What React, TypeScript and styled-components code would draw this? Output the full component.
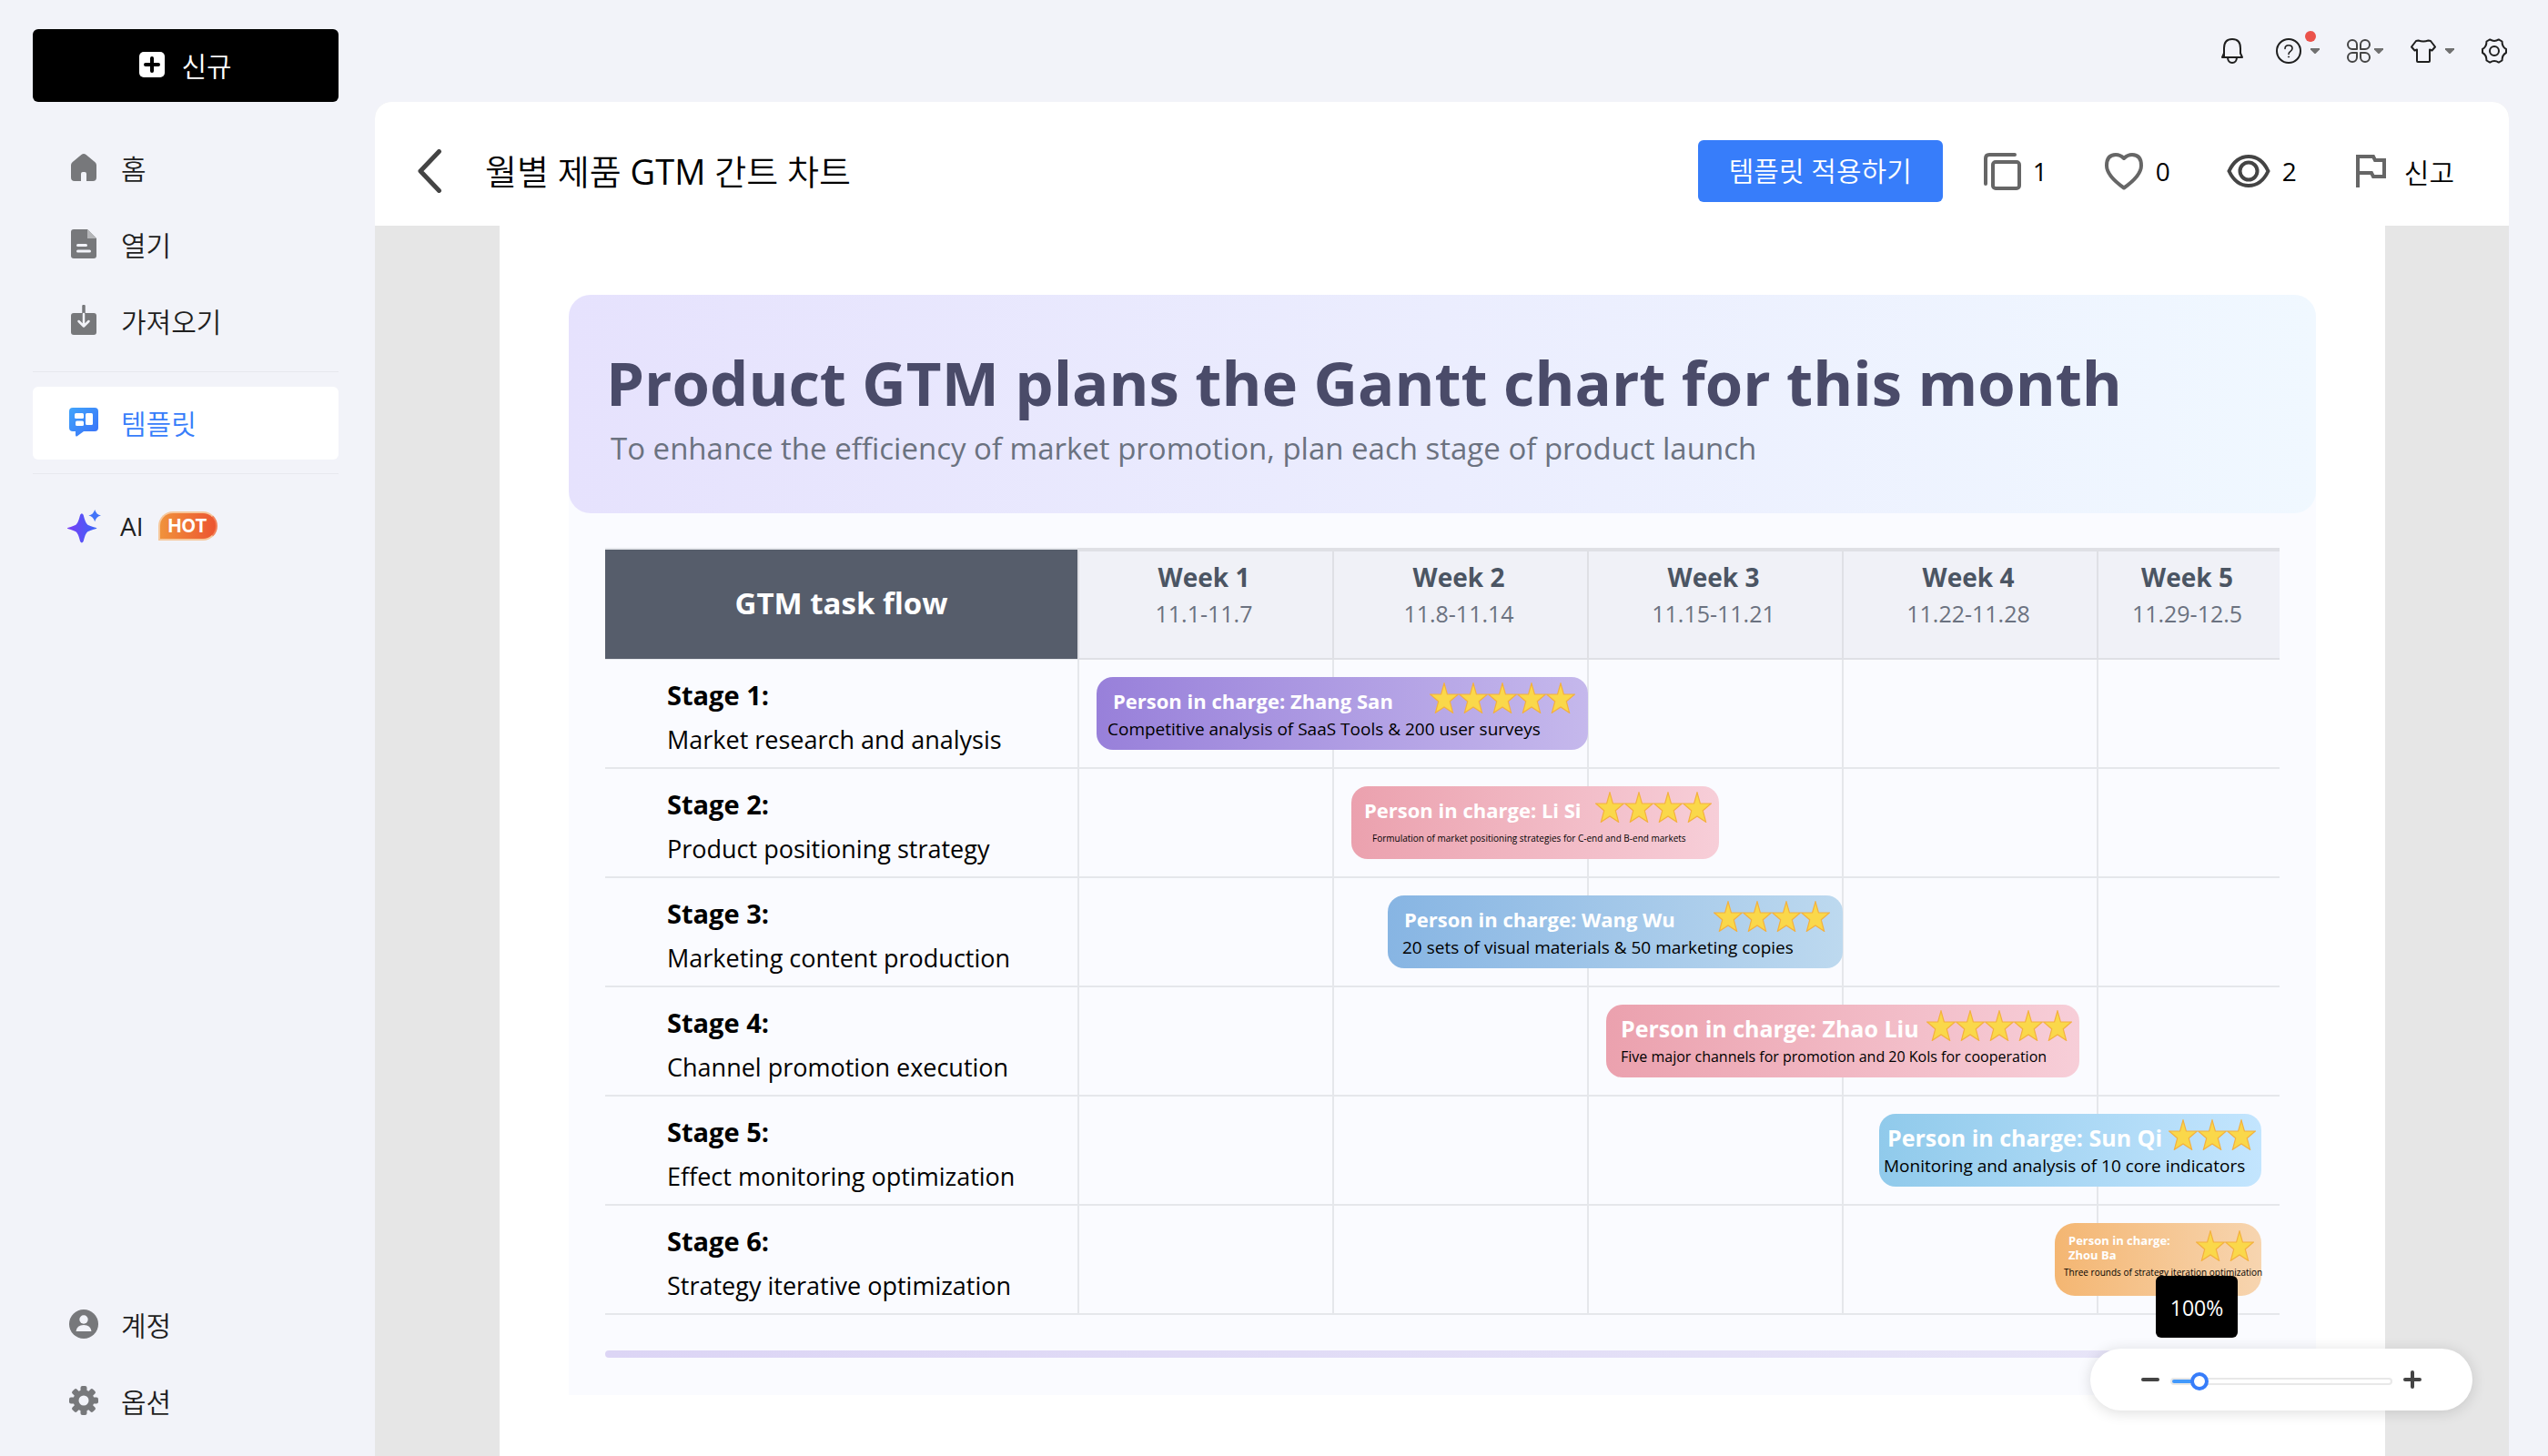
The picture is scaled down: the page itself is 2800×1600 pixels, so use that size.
import React, { useState } from "react";
import styled, { createGlobalStyle } from "styled-components";

const GlobalStyle = createGlobalStyle`
  *, *::before, *::after { box-sizing: border-box; }
  body {
    margin: 0;
    background: #f2f3f9;
    color: #1f1f1f;
    font-family: "Open Sans", "Noto Sans CJK KR", sans-serif;
  }
  button, input { font: inherit; color: inherit; }
  button { border: 0; padding: 0; background: none; cursor: pointer; }
  h1, h2, p { margin: 0; }
  svg { display: block; flex: none; }
`;

/* ---------- shell ---------- */

const Shell = styled.div`
  display: grid;
  grid-template-columns: 412px minmax(0, 1fr);
  min-height: 100vh;
`;

const Sidebar = styled.aside`
  display: flex;
  flex-direction: column;
  padding: 32px 40px 20px 36px;
`;

const NewButton = styled.button`
  display: flex;
  align-items: center;
  justify-content: center;
  gap: 18px;
  height: 80px;
  margin-bottom: 33px;
  padding-bottom: 2px;
  border-radius: 6px;
  background: #000;
  color: #fff;
  font-size: 30px;
  font-weight: 350;
`;

const Nav = styled.nav`
  display: flex;
  flex-direction: column;
  gap: 4px;
`;

const BottomNav = styled(Nav)`
  margin-top: auto;
`;

const NavItem = styled.a<{ $active?: boolean }>`
  display: flex;
  align-items: center;
  gap: 25px;
  height: 80px;
  padding: 0 0 3px 40px;
  border-radius: 6px;
  background: ${(p) => (p.$active ? "#fff" : "transparent")};
  color: ${(p) => (p.$active ? "#377dfa" : "#1f1f1f")};
  font-size: 30px;
  font-weight: 350;
  text-decoration: none;
`;

const AiItem = styled(NavItem)`
  gap: 21px;
  padding: 1px 0 0 38px;
`;

const LatinLabel = styled.span`
  font-size: 28px;
  font-weight: 400;
`;

const Divider = styled.hr`
  width: 100%;
  height: 1px;
  margin: 15px 0 16px;
  border: 0;
  background: #e7e8ee;
`;

const HotBadge = styled.span`
  display: flex;
  align-items: center;
  height: 32px;
  margin-left: -5px;
  padding: 0 9px;
  border: 2px solid #f6c79b;
  border-right-color: #f2825a;
  border-radius: 16px 16px 16px 0;
  background: linear-gradient(90deg, #f0923c, #ec5530);
  color: #fff;
  font-family: Inter, sans-serif;
  font-size: 20px;
  font-weight: 700;
`;

const Content = styled.div`
  display: flex;
  flex-direction: column;
  min-width: 0;
  padding-right: 43px;
`;

const TopBar = styled.header`
  display: flex;
  align-items: center;
  justify-content: flex-end;
  gap: 30px;
  height: 112px;
  padding-right: 2px;
`;

const TopButton = styled.button<{ $gap?: number }>`
  position: relative;
  display: flex;
  align-items: center;
  gap: ${(p) => p.$gap ?? 0}px;
`;

const Dot = styled.span`
  position: absolute;
  top: -8px;
  right: 4px;
  width: 12px;
  height: 12px;
  border-radius: 50%;
  background: #eb524b;
`;

const Panel = styled.main`
  position: relative;
  display: flex;
  flex: 1;
  flex-direction: column;
  overflow: hidden;
  border-radius: 18px 18px 0 0;
  background: #e6e6e6;
`;

const TitleBar = styled.div`
  display: flex;
  align-items: center;
  height: 136px;
  padding: 16px 60px 0 46px;
  background: #fff;
`;

const BackButton = styled.button`
  display: flex;
  margin-right: 47px;
`;

const DocTitle = styled.h1`
  flex: 1;
  padding-bottom: 4px;
  color: #000;
  font-size: 38px;
  font-weight: 350;
  white-space: nowrap;
`;

const Latin = styled.span`
  font-weight: 400;
`;

const Actions = styled.div`
  display: flex;
  align-items: center;
  gap: 44px;
`;

const Stats = styled.div`
  display: flex;
  align-items: center;
  gap: 62px;
`;

const ApplyButton = styled.button`
  height: 68px;
  padding: 0 34px 4px;
  border-radius: 6px;
  background: #377dfa;
  color: #fff;
  font-size: 30px;
  font-weight: 350;
  white-space: nowrap;
`;

const Action = styled.button`
  display: flex;
  align-items: center;
  gap: 13px;
  color: #000;
  font-size: 28px;
  white-space: nowrap;
`;

const ReportAction = styled(Action)`
  gap: 20px;
  padding-left: 2px;
  font-size: 30px;
  font-weight: 350;
`;

/* ---------- document ---------- */

const Viewer = styled.div`
  display: flex;
  flex: 1;
  padding: 0 136px 0 137px;
`;

const Page = styled.div`
  flex: 1;
  min-width: 0;
  padding: 76px 76px 60px;
  background: #fff;
`;

const Card = styled.section`
  border-radius: 24px 24px 0 0;
  background: #fafbff;
  padding-bottom: 41px;
`;

const Banner = styled.div`
  min-height: 240px;
  padding: 56px 41px 47px;
  border-radius: 24px;
  background: linear-gradient(90deg, #e6e2fd, #f0f8ff);
`;

const BannerTitle = styled.h2`
  color: #4a4b69;
  font-size: 67px;
  font-weight: 700;
  line-height: 80px;
  white-space: nowrap;
`;

const BannerText = styled.p`
  margin-top: 9px;
  padding-left: 5px;
  color: #6b7280;
  font-size: 33px;
  line-height: 48px;
  white-space: nowrap;
`;

const ChartArea = styled.div`
  padding: 38px 40px 0;
`;

const Gantt = styled.table`
  display: block;
  width: 100%;
  border-spacing: 0;
  thead, tbody { display: block; }
`;

const columns = "519fr 280fr 280fr 280fr 280fr 201fr";

const HeadRow = styled.tr`
  display: grid;
  grid-template-columns: ${columns};
  height: 123px;
`;

const TaskHead = styled.th`
  display: flex;
  align-items: center;
  justify-content: center;
  padding: 0 0 4px;
  border-top: 2px solid #e5e7eb;
  border-bottom: 1px solid #e5e7eb;
  background: #565d6b;
  color: #fff;
  font-size: 33px;
  font-weight: 700;
`;

const WeekHead = styled.th`
  display: flex;
  flex-direction: column;
  padding: 8px 4px 0 0;
  border: solid #dfe0e5;
  border-width: 4px 0 2px 2px;
  background: #f0f1f7;
  color: #4b5563;
  font-size: 28px;
  font-weight: 700;
  line-height: 40px;
  text-align: center;
`;

const WeekDates = styled.span`
  color: #6b7280;
  font-size: 25px;
  font-weight: 400;
`;

const Row = styled.tr`
  position: relative;
  display: grid;
  grid-template-columns: ${columns};
  height: 120px;
`;

const Stage = styled.th`
  display: flex;
  flex-direction: column;
  gap: 1px;
  padding: 15px 0 0 68px;
  border-bottom: 2px solid #e5e7eb;
  color: #000;
  font-size: 29px;
  font-weight: 700;
  line-height: 48px;
  text-align: left;
  white-space: nowrap;
`;

const StageText = styled.span`
  font-size: 27px;
  font-weight: 400;
`;

const Cell = styled.td`
  padding: 0;
  border: solid #e5e7eb;
  border-width: 0 0 2px 2px;
`;

const Bar = styled.div<{ $from: string; $to: string; $compact?: boolean }>`
  position: absolute;
  top: 19px;
  height: 80px;
  padding-top: ${(p) => (p.$compact ? 8 : 6)}px;
  border-radius: ${(p) => (p.$compact ? 22 : 18)}px;
  background: linear-gradient(90deg, ${(p) => p.$from}, ${(p) => p.$to});
`;

const BarHead = styled.div<{ $left: number; $right: number; $compact?: boolean }>`
  display: flex;
  align-items: ${(p) => (p.$compact ? "flex-start" : "flex-end")};
  justify-content: space-between;
  height: ${(p) => (p.$compact ? 36 : 34)}px;
  padding: 0 ${(p) => p.$right}px 0 ${(p) => p.$left}px;
`;

const Owner = styled.strong<{ $size: number; $compact?: boolean }>`
  padding-top: ${(p) => (p.$compact ? 3 : 0)}px;
  color: #fff;
  font-size: ${(p) => p.$size}px;
  font-weight: 700;
  line-height: ${(p) => (p.$compact ? 16 : 28)}px;
  white-space: pre;
`;

const Stars = styled.span`
  display: flex;
`;

const BarText = styled.p<{ $left: number; $size: number; $compact?: boolean }>`
  margin-top: ${(p) => (p.$compact ? 0 : 5)}px;
  padding-left: ${(p) => p.$left}px;
  color: #000;
  font-size: ${(p) => p.$size}px;
  line-height: ${(p) => (p.$compact ? 20 : 24)}px;
  white-space: nowrap;
`;

const FootLine = styled.div`
  height: 8px;
  margin-top: 39px;
  border-radius: 4px;
  background: linear-gradient(90deg, #dcd5f5, #e8e6f8);
`;

/* ---------- zoom control ---------- */

const ZoomDock = styled.div`
  position: absolute;
  right: 40px;
  bottom: 50px;
  display: flex;
  align-items: center;
  gap: 12px;
  width: 420px;
  height: 68px;
  padding: 0 56px;
  border-radius: 34px;
  background: #fff;
  box-shadow: 0 2px 16px rgba(0, 0, 0, 0.14);
`;

const ZoomSlider = styled.input`
  flex: 1;
  min-width: 0;
  height: 20px;
  margin: 4px 0 0;
  appearance: none;
  background: transparent;

  &::-webkit-slider-runnable-track {
    height: 8px;
    border: 2px solid #e8e8e8;
    border-radius: 4px;
    background: linear-gradient(#4299fb, #4299fb) 0 0 / 24px 100% no-repeat #fff;
  }
  &::-webkit-slider-thumb {
    appearance: none;
    width: 20px;
    height: 20px;
    margin-top: -8px;
    border: 4px solid #377dfa;
    border-radius: 50%;
    background: #fff;
  }
`;

const ZoomTip = styled.output`
  position: absolute;
  right: 258px;
  bottom: 80px;
  display: flex;
  align-items: center;
  justify-content: center;
  width: 90px;
  height: 68px;
  padding-top: 2px;
  border-radius: 6px;
  background: #000;
  color: #fff;
  font-size: 23px;
`;

/* ---------- icons ---------- */

const PlusSquareIcon = () => (
  <svg width="28" height="28" viewBox="0 0 28 28">
    <rect width="28" height="28" rx="5" fill="#fff" />
    <path d="M14 7v14M7 14h14" stroke="#000" strokeWidth="4" strokeLinecap="round" />
  </svg>
);

const HomeIcon = () => (
  <svg width="32" height="32" viewBox="0 0 32 32" fill="#77787b">
    <path d="M13.400 2q2.600-2 5.200 0L28.500 10.200Q30 11.600 30 13.500V27q0 4-4 4h-7v-8q0-2-2-2h-2q-2 0-2 2v8H6q-4 0-4-4V13.500q0-1.900 1.500-3.300z" />
  </svg>
);

const FileIcon = () => (
  <svg width="32" height="32" viewBox="0 0 32 32">
    <path d="M5 0h15l10 10v19q0 3-3 3H5q-3 0-3-3V3q0-3 3-3z" fill="#77787b" />
    <path d="M20 0l10 10H20z" fill="#b4b5b8" />
    <path d="M9.500 17.500h9M9.500 24h13" stroke="#f2f3f9" strokeWidth="3" strokeLinecap="round" />
  </svg>
);

const ImportIcon = () => (
  <svg width="32" height="34" viewBox="0 0 32 34">
    <rect x="2" y="9" width="28" height="24" rx="3" fill="#77787b" />
    <path d="M16 1.500V9" stroke="#77787b" strokeWidth="3.500" strokeLinecap="round" />
    <path d="M16 10v13M10.500 18l5.500 5.500 5.500-5.500" fill="none" stroke="#f2f3f9" strokeWidth="2.500" strokeLinecap="round" strokeLinejoin="round" />
  </svg>
);

const TemplateIcon = () => (
  <svg width="32" height="32" viewBox="0 0 32 32">
    <defs>
      <linearGradient id="tpl" x1="0" y1="0" x2="1" y2="1">
        <stop offset="0" stopColor="#41a5fb" />
        <stop offset="1" stopColor="#3a70f8" />
      </linearGradient>
    </defs>
    <path d="M4 0h24q4 0 4 4v18q0 4-4 4H16l-7.500 5.500Q7 32 7 30v-4H4q-4 0-4-4V4q0-4 4-4z" fill="url(#tpl)" />
    <g fill="#fff">
      <rect x="6" y="6" width="10" height="6" rx="1.500" />
      <rect x="7" y="14.500" width="9" height="5.500" rx="1.500" />
      <rect x="18" y="6" width="8" height="13" rx="1.500" />
    </g>
  </svg>
);

const SparkleIcon = () => (
  <svg width="37" height="38" viewBox="0 0 38 38">
    <defs>
      <linearGradient id="spark" x1="0" y1="0" x2="1" y2="0">
        <stop offset="0" stopColor="#7a3df5" />
        <stop offset="1" stopColor="#3a66f8" />
      </linearGradient>
    </defs>
    <path d="M14.500 6.500q1.800-3.200 3.600 0 2.400 9.900 4.900 11.200 1.500 1 9.500 3.300 1.500.500 0 1-8 2.300-9.500 3.300-2.500 1.300-4.900 11.200-1.800 3-3.600 0-2.400-9.900-4.900-11.200Q8.100 24.300.500 22q-1.500-.500 0-1 7.600-2.300 9.100-3.300 2.500-1.300 4.900-11.200z" fill="url(#spark)" />
    <path d="M31 .500q1.600 5.700 7 6.800-5.400 1.100-7 6.800-1.600-5.700-7-6.800 5.400-1.100 7-6.800z" fill="#4274f8" />
  </svg>
);

const UserIcon = () => (
  <svg width="32" height="32" viewBox="0 0 32 32">
    <circle cx="16" cy="16" r="16" fill="#77787b" />
    <circle cx="16" cy="11" r="4.700" fill="#f2f3f9" />
    <path d="M7.500 24q1-7 8.500-7t8.500 7z" fill="#f2f3f9" />
  </svg>
);

const CogIcon = () => (
  <svg width="32" height="32" viewBox="0 0 32 32">
    <g fill="#77787b">
      {[0, 45, 90, 135].map((a) => (
        <rect key={a} transform={`rotate(${a} 16 16)`} x="12.500" y="0" width="7" height="32" rx="2" />
      ))}
      <circle cx="16" cy="16" r="11.500" />
    </g>
    <circle cx="16" cy="16" r="5.500" fill="#f2f3f9" />
  </svg>
);

const Caret = () => (
  <svg width="10" height="6" viewBox="0 0 10 6">
    <path d="M0 0h10v1.500L5.500 6h-1L0 1.500z" fill="#707070" />
  </svg>
);

const line = { fill: "none", stroke: "#1f1f1f", strokeWidth: 2, strokeLinejoin: "round" as const, strokeLinecap: "round" as const };

const BellIcon = () => (
  <svg width="32" height="28" viewBox="-2 0 32 28" {...line}>
    <path d="M3 20.500V11q0-10 9-10t9 10v5.500l2 4.500H1l2-4.500" />
    <path d="M7 21.500q.500 5.500 5 5.500t5-5.500" />
  </svg>
);

const HelpIcon = () => (
  <svg width="28" height="28" viewBox="0 0 28 28" {...line}>
    <circle cx="14" cy="14" r="13" />
    <path d="M10 11.500Q10 7.800 14 7.800t4 3.400q0 1.800-2 3.200-2 1.300-2 3.100" strokeWidth="1.600" />
    <circle cx="14" cy="20.500" r=".6" strokeWidth="1" />
  </svg>
);

const AppsIcon = () => (
  <svg width="26" height="26" viewBox="0 0 26 26" {...line} stroke="#444">
    <path d="M11 11H6a5 5 0 1 1 5-5z" />
    <path d="M15 11h5a5 5 0 1 0-5-5z" />
    <path d="M11 15H6a5 5 0 1 0 5 5z" />
    <path d="M15 15h5a5 5 0 1 1-5 5z" />
  </svg>
);

const ShirtIcon = () => (
  <svg width="28" height="26" viewBox="0 0 28 26" {...line}>
    <path d="M8.500 1.500Q14 3.500 19.500 1.500L22 2l5 6.500-3.500 4-2.500-1V24q0 1-1 1H8q-1 0-1-1V11.500l-2.500 1L1 8.500 6 2z" />
  </svg>
);

const HexGearIcon = () => (
  <svg width="28" height="28" viewBox="0 0 28 28" {...line}>
    <circle cx="14" cy="14" r="5" />
    <path d="M27 12V16Q22.600 18.200 22.500 24.500L18.800 26.600Q14 23.400 9.200 26.600L5.500 24.500Q5.400 18.200 1 16V12Q5.400 9.800 5.500 3.500L9.200 1.400Q14 4.600 18.800 1.400L22.500 3.500Q22.600 9.800 27 12z" />
  </svg>
);

const BackIcon = () => (
  <svg width="28" height="48" viewBox="0 0 28 48">
    <path d="M24.500 2.500L4 24l20.500 21.500" fill="none" stroke="#444" strokeWidth="5" strokeLinecap="round" strokeLinejoin="round" />
  </svg>
);

const CopyIcon = () => (
  <svg width="42" height="42" viewBox="0 0 42 42" fill="none" stroke="#666" strokeWidth="4" strokeLinecap="round">
    <rect x="11" y="11" width="29" height="29" rx="3" />
    <path d="M3 35V7q0-4 4-4h28" />
  </svg>
);

const HeartIcon = () => (
  <svg width="44" height="42" viewBox="0 0 44 42">
    <path d="M22 39.500Q3 26 3 15 3 3 13 3q5 0 9 4 4-4 9-4 10 0 10 12 0 11-19 24.500z" fill="none" stroke="#666" strokeWidth="4" strokeLinejoin="round" />
  </svg>
);

const EyeIcon = () => (
  <svg width="48" height="38" viewBox="0 0 48 38" fill="none" stroke="#444" strokeWidth="4">
    <path d="M2.500 19Q10 3 24 3t21.500 16Q38 35 24 35T2.500 19z" />
    <circle cx="24" cy="19" r="9.500" />
  </svg>
);

const FlagIcon = () => (
  <svg width="34" height="38" viewBox="0 0 34 38">
    <path d="M3 37V3h17l2 4h10v18H20l-2-4H3" fill="none" stroke="#666" strokeWidth="4" />
  </svg>
);

const StarIcon = () => (
  <svg width="32" height="34" viewBox="0 0 32 34">
    <path d="M16 .800L19.400 13H31.400L22.300 20.800 25.600 33.300 16 27 6.400 33.300 9.700 20.800.600 13H12.600z" fill="#fad84a" stroke="#f4b03e" strokeWidth="1.200" />
  </svg>
);

const MinusIcon = () => (
  <svg width="20" height="20" viewBox="0 0 20 20">
    <path d="M2 10h16" stroke="#444" strokeWidth="4" strokeLinecap="round" />
  </svg>
);

const PlusIcon = () => (
  <svg width="20" height="20" viewBox="0 0 20 20">
    <path d="M2 10h16M10 2v16" stroke="#444" strokeWidth="4" strokeLinecap="round" />
  </svg>
);

/* ---------- data ---------- */

const weeks = [
  ["Week 1", "11.1-11.7"],
  ["Week 2", "11.8-11.14"],
  ["Week 3", "11.15-11.21"],
  ["Week 4", "11.22-11.28"],
  ["Week 5", "11.29-12.5"],
];

/* start and span are in units of the 1840-unit wide chart */
const stages = [
  { text: "Market research and analysis", start: 540, span: 540, from: "#9880da", to: "#c5b8ec", owner: "Person in charge: Zhang San", ownerSize: 22, ownerLeft: 18, stars: 5, right: 14, note: "Competitive analysis of SaaS Tools & 200 user surveys", noteSize: 19, noteLeft: 12 },
  { text: "Product positioning strategy", start: 820, span: 404, from: "#eba1ae", to: "#f7ced8", owner: "Person in charge: Li Si", ownerSize: 22, ownerLeft: 14, stars: 4, right: 8, note: "Formulation of market positioning strategies for C-end and B-end markets", noteSize: 10, noteLeft: 23 },
  { text: "Marketing content production", start: 860, span: 500, from: "#87b5e3", to: "#bdd9ef", owner: "Person in charge: Wang Wu", ownerSize: 22, ownerLeft: 18, stars: 4, right: 14, note: "20 sets of visual materials & 50 marketing copies", noteSize: 19, noteLeft: 16 },
  { text: "Channel promotion execution", start: 1100, span: 520, from: "#eba1ae", to: "#f7ced8", owner: "Person in charge: Zhao Liu", ownerSize: 25, ownerLeft: 16, stars: 5, right: 8, note: "Five major channels for promotion and 20 Kols for cooperation", noteSize: 16, noteLeft: 16 },
  { text: "Effect monitoring optimization", start: 1400, span: 420, from: "#90caeb", to: "#c3e5fe", owner: "Person in charge: Sun Qi", ownerSize: 25, ownerLeft: 9, stars: 3, right: 6, note: "Monitoring and analysis of 10 core indicators", noteSize: 19, noteLeft: 5 },
  { text: "Strategy iterative optimization", start: 1593, span: 227, from: "#f4b672", to: "#f7d5b0", owner: "Person in charge:\nZhou Ba", ownerSize: 13, ownerLeft: 15, stars: 2, right: 8, note: "Three rounds of strategy iteration optimization", noteSize: 10, noteLeft: 10, compact: true },
];

const pct = (n: number) => `${(n / 1840) * 100}%`;

function StageBar({ stage }: { stage: (typeof stages)[number] }) {
  const { compact } = stage;
  return (
    <Bar $from={stage.from} $to={stage.to} $compact={compact} style={{ left: pct(stage.start), width: pct(stage.span) }}>
      <BarHead $left={stage.ownerLeft} $right={stage.right} $compact={compact}>
        <Owner $size={stage.ownerSize} $compact={compact}>{stage.owner}</Owner>
        <Stars role="img" aria-label={`${stage.stars}`}>
          {Array.from({ length: stage.stars }, (_, i) => <StarIcon key={i} />)}
        </Stars>
      </BarHead>
      <BarText $left={stage.noteLeft} $size={stage.noteSize} $compact={compact}>{stage.note}</BarText>
    </Bar>
  );
}

function ZoomControl() {
  const [zoom, setZoom] = useState(100);
  const step = (d: number) => setZoom((z) => Math.min(1000, Math.max(10, z + d)));
  return (
    <ZoomDock>
      <ZoomTip htmlFor="zoom">{zoom}%</ZoomTip>
      <button aria-label="축소" onClick={() => step(-10)}><MinusIcon /></button>
      <ZoomSlider id="zoom" type="range" min={10} max={1000} value={zoom} aria-label="확대/축소" onChange={(e) => setZoom(Number(e.target.value))} />
      <button aria-label="확대" onClick={() => step(10)}><PlusIcon /></button>
    </ZoomDock>
  );
}

export default function App() {
  return (
    <>
      <GlobalStyle />
      <Shell>
        <Sidebar>
          <NewButton><PlusSquareIcon />신규</NewButton>
          <Nav>
            <NavItem href="#home"><HomeIcon />홈</NavItem>
            <NavItem href="#open"><FileIcon />열기</NavItem>
            <NavItem href="#import"><ImportIcon />가져오기</NavItem>
          </Nav>
          <Divider />
          <NavItem href="#templates" $active><TemplateIcon />템플릿</NavItem>
          <Divider />
          <AiItem href="#ai">
            <SparkleIcon />
            <LatinLabel>AI</LatinLabel>
            <HotBadge>HOT</HotBadge>
          </AiItem>
          <BottomNav>
            <NavItem href="#account"><UserIcon />계정</NavItem>
            <NavItem href="#options"><CogIcon />옵션</NavItem>
          </BottomNav>
        </Sidebar>

        <Content>
          <TopBar>
            <TopButton aria-label="알림"><BellIcon /></TopButton>
            <TopButton aria-label="도움말" $gap={10}><HelpIcon /><Caret /><Dot /></TopButton>
            <TopButton aria-label="앱" $gap={4}><AppsIcon /><Caret /></TopButton>
            <TopButton aria-label="테마" $gap={10}><ShirtIcon /><Caret /></TopButton>
            <TopButton aria-label="설정"><HexGearIcon /></TopButton>
          </TopBar>

          <Panel>
            <TitleBar>
              <BackButton aria-label="뒤로"><BackIcon /></BackButton>
              <DocTitle>월별 제품 <Latin>GTM</Latin> 간트 차트</DocTitle>
              <Actions>
                <ApplyButton>템플릿 적용하기</ApplyButton>
                <Stats>
                  <Action><CopyIcon />1</Action>
                  <Action><HeartIcon />0</Action>
                  <Action><EyeIcon />2</Action>
                  <ReportAction><FlagIcon />신고</ReportAction>
                </Stats>
              </Actions>
            </TitleBar>

            <Viewer>
              <Page>
                <Card>
                  <Banner>
                    <BannerTitle>Product GTM plans the Gantt chart for this month</BannerTitle>
                    <BannerText>To enhance the efficiency of market promotion, plan each stage of product launch</BannerText>
                  </Banner>
                  <ChartArea>
                    <Gantt>
                      <thead>
                        <HeadRow>
                          <TaskHead scope="col">GTM task flow</TaskHead>
                          {weeks.map(([name, dates]) => (
                            <WeekHead scope="col" key={name}>
                              {name}
                              <WeekDates>{dates}</WeekDates>
                            </WeekHead>
                          ))}
                        </HeadRow>
                      </thead>
                      <tbody>
                        {stages.map((stage, i) => (
                          <Row key={stage.text}>
                            <Stage scope="row">
                              <span>Stage {i + 1}:</span>
                              <StageText>{stage.text}</StageText>
                            </Stage>
                            {weeks.map(([name], w) => (
                              <Cell key={name}>{w === 0 && <StageBar stage={stage} />}</Cell>
                            ))}
                          </Row>
                        ))}
                      </tbody>
                    </Gantt>
                    <FootLine />
                  </ChartArea>
                </Card>
              </Page>
            </Viewer>
            <ZoomControl />
          </Panel>
        </Content>
      </Shell>
    </>
  );
}
